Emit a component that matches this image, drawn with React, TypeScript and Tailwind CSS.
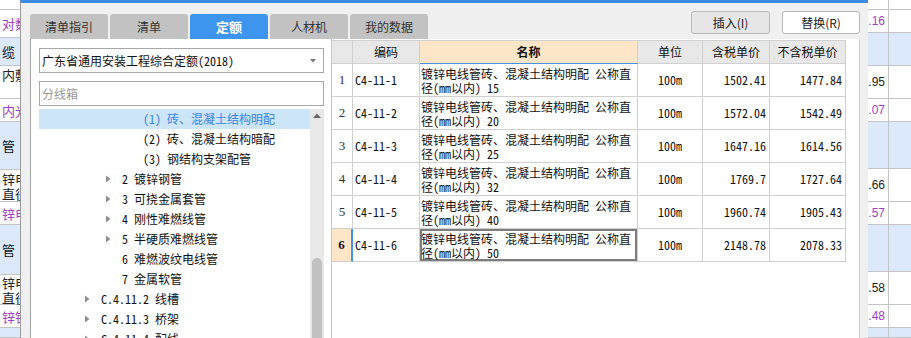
const base = "font-['Noto_Sans_Mono_CJK_SC','Noto_Sans_CJK_SC',sans-serif]";

const leftRows = [
  { h: 'h-[10px]', text: '', tone: 'white' },
  { h: 'h-[28px]', text: '对数', tone: 'purple' },
  { h: 'h-[28px]', text: '缆', tone: 'blue' },
  { h: 'h-[33px]', text: '内敷', tone: 'top' },
  { h: 'h-[23px]', text: '内光', tone: 'purple' },
  { h: 'h-[48px]', text: '管', tone: 'blue' },
  { h: 'h-[32px]', text: '锌电\n直径', tone: 'white' },
  { h: 'h-[23px]', text: '锌电', tone: 'purple' },
  { h: 'h-[50px]', text: '管', tone: 'blue' },
  { h: 'h-[30px]', text: '锌电\n直径', tone: 'white' },
  { h: 'h-[23px]', text: '锌钢', tone: 'purple' },
  { h: 'h-[10px]', text: '', tone: 'blue' },
];

const rightRows = [
  { h: 'h-[10px]', text: '', tone: 'white' },
  { h: 'h-[23px]', text: '1.16', tone: 'purple' },
  { h: 'h-[33px]', text: '', tone: 'blue' },
  { h: 'h-[33px]', text: '2.95', tone: 'white' },
  { h: 'h-[23px]', text: '1.07', tone: 'purple' },
  { h: 'h-[47px]', text: '', tone: 'blue' },
  { h: 'h-[33px]', text: '2.66', tone: 'white' },
  { h: 'h-[23px]', text: '1.57', tone: 'purple' },
  { h: 'h-[47px]', text: '', tone: 'blue' },
  { h: 'h-[33px]', text: '3.58', tone: 'white' },
  { h: 'h-[23px]', text: '1.48', tone: 'purple' },
  { h: 'h-[10px]', text: '', tone: 'blue' },
];

const tabs = ['清单指引', '清单', '定额', '人材机', '我的数据'];

const tree = [
  { pl: 'pl-[88px]', arrow: false, text: '(1) 砖、混凝土结构明配', selected: true },
  { pl: 'pl-[88px]', arrow: false, text: '(2) 砖、混凝土结构暗配' },
  { pl: 'pl-[88px]', arrow: false, text: '(3) 钢结构支架配管' },
  { pl: 'pl-[67px]', arrow: true, text: '2 镀锌钢管' },
  { pl: 'pl-[67px]', arrow: true, text: '3 可挠金属套管' },
  { pl: 'pl-[67px]', arrow: true, text: '4 刚性难燃线管' },
  { pl: 'pl-[67px]', arrow: true, text: '5 半硬质难燃线管' },
  { pl: 'pl-[67px]', arrow: false, text: '6 难燃波纹电线管' },
  { pl: 'pl-[67px]', arrow: false, text: '7 金属软管' },
  { pl: 'pl-[46px]', arrow: true, text: 'C.4.11.2 线槽' },
  { pl: 'pl-[46px]', arrow: true, text: 'C.4.11.3 桥架' },
  { pl: 'pl-[46px]', arrow: true, text: 'C.4.11.4 配线' },
];

const items = [
  { code: 'C4-11-1', size: '15', unit: '100m', tax: '1502.41', net: '1477.84' },
  { code: 'C4-11-2', size: '20', unit: '100m', tax: '1572.04', net: '1542.49' },
  { code: 'C4-11-3', size: '25', unit: '100m', tax: '1647.16', net: '1614.56' },
  { code: 'C4-11-4', size: '32', unit: '100m', tax: '1769.7', net: '1727.64' },
  { code: 'C4-11-5', size: '40', unit: '100m', tax: '1960.74', net: '1905.43' },
  { code: 'C4-11-6', size: '50', unit: '100m', tax: '2148.78', net: '2078.33' },
];

function toneClass(tone: string) {
  if (tone === 'blue') return 'bg-[#dce8fb]';
  if (tone === 'purple') return 'bg-white text-[#a23ec6]';
  return 'bg-white text-[#222]';
}

function Arrow() {
  return (
    <svg width="5" height="8" viewBox="0 0 5 8" className="shrink-0">
      <path d="M0 0.5 L4.5 4 L0 7.5 Z" fill="#8f8f8f" />
    </svg>
  );
}

export default function App() {
  return (
    <div className={`relative h-[338px] w-[911px] overflow-hidden bg-white text-[12px] text-[#111] ${base}`}>
      {/* sheet behind the dialog */}
      <div className="flex h-full">
        <div className="flex w-[48px] flex-col border-r border-[#c4c4c4]">
          {leftRows.map((row, i) => (
            <div
              key={i}
              className={`${row.h} ${toneClass(row.tone)} flex shrink-0 ${row.tone === 'top' ? 'items-start pt-[1px]' : 'items-center'} whitespace-pre border-b border-[#c4c4c4] pl-[2px] text-[13px] leading-[15px]`}
            >
              {row.text}
            </div>
          ))}
        </div>
        <div className="flex-1" />
        <div className="flex w-[52px] flex-col border-r border-[#c4c4c4]">
          {rightRows.map((row, i) => (
            <div
              key={i}
              className={`${row.h} ${toneClass(row.tone)} flex shrink-0 items-center justify-end border-b border-[#c4c4c4] pr-[3px] font-['Liberation_Sans',sans-serif] text-[12px]`}
            >
              {row.text}
            </div>
          ))}
        </div>
        <div className="flex w-[22px] flex-col">
          {rightRows.map((row, i) => (
            <div key={i} className={`${row.h} ${toneClass(row.tone)} shrink-0 border-b border-[#c4c4c4]`} />
          ))}
        </div>
      </div>

      {/* dialog */}
      <div className="absolute left-[20px] top-0 flex h-[338px] w-[848px] flex-col border-l border-t-[3px] border-l-[#9c9c9c] border-t-[#3c8ce6] bg-[#f0f0f0]">
        <div className="flex h-[36px] shrink-0 items-start justify-between pl-[9px] pr-[8px]">
          <div className="flex gap-[2px] self-end">
            {tabs.map((t) => (
              <div
                key={t}
                className={`flex h-[25px] w-[78px] items-center justify-center rounded-t-[3px] ${
                  t === '定额' ? 'bg-[#3d95ee] text-[13px] font-bold text-white' : 'bg-[#c2c2c2] text-[#333]'
                } font-['Noto_Sans_CJK_SC',sans-serif]`}
              >
                {t}
              </div>
            ))}
          </div>
          <div className="mt-[8px] flex gap-[12px] font-['Noto_Sans_CJK_SC',sans-serif]">
            <button className="flex h-[23px] w-[79px] items-center justify-center rounded-[3px] border border-[#b8b8b8] bg-[#e6e6e6] text-[12px] text-[#222]">
              插入(I)
            </button>
            <button className="flex h-[23px] w-[78px] items-center justify-center rounded-[3px] border border-[#b8b8b8] bg-white text-[12px] text-[#222]">
              替换(R)
            </button>
          </div>
        </div>

        <div className="ml-[9px] mr-[8px] flex min-h-0 flex-1 border-l border-r border-l-[#a4a4a4] border-r-[#d0d0d0] bg-white">
          {/* left: quota library tree */}
          <div className="flex w-[293px] shrink-0 flex-col pl-[8px] pt-[9px]">
            <div className="flex h-[25px] items-center justify-between border border-[#a8a8a8] pl-[2px] pr-[7px]">
              <span>广东省通用安装工程综合定额(2018)</span>
              <svg width="6" height="4" viewBox="0 0 6 4">
                <path d="M0 0 L6 0 L3 3.5 Z" fill="#7a7a7a" />
              </svg>
            </div>
            <div className="mt-[8px] flex h-[25px] items-center border border-[#a8a8a8] pl-[2px] text-[#9a9a9a]">
              分线箱
            </div>
            <div className="mt-[3px] flex min-h-0 flex-1">
              <div className="min-w-0 flex-1">
                {tree.map((n) => (
                  <div
                    key={n.text}
                    className={`flex h-[20px] items-center ${n.pl} whitespace-nowrap ${
                      n.selected ? 'bg-[#cce5f8] text-[#3a84e4]' : ''
                    }`}
                  >
                    <span className="flex w-[16px] shrink-0 items-center">{n.arrow && <Arrow />}</span>
                    {n.text}
                  </div>
                ))}
              </div>
              <div className="flex w-[14px] shrink-0 flex-col items-center bg-[#e8e8e8]">
                <svg width="8" height="5" viewBox="0 0 8 5" className="mt-[4px]">
                  <path d="M0 5 L4 0.5 L8 5 Z" fill="#6a6a6a" />
                </svg>
                <div className="mt-[140px] w-[10px] flex-1 rounded-t-[5px] bg-[#c1c1c1]" />
              </div>
            </div>
          </div>

          {/* right: quota grid */}
          <div className="ml-[7px] min-w-0 flex-1 border-l border-[#c8c8c8] pt-[1px]">
            <div className="grid w-[514px] grid-cols-[21px_67px_218px_65px_67px_76px] border-t border-[#d0d0d0]">
              <div className="h-[23px] border-b border-r border-[#d0d0d0] bg-[#e8e8e8]" />
              <div className="flex h-[23px] items-center justify-center border-b border-r border-[#d0d0d0] bg-[#e8e8e8]">编码</div>
              <div className="flex h-[23px] items-center justify-center border-b border-r border-b-[#4a90e2] border-r-[#d0d0d0] bg-[#fde5c8] font-bold">名称</div>
              <div className="flex h-[23px] items-center justify-center border-b border-r border-[#d0d0d0] bg-[#e8e8e8]">单位</div>
              <div className="flex h-[23px] items-center justify-center border-b border-r border-[#d0d0d0] bg-[#e8e8e8]">含税单价</div>
              <div className="flex h-[23px] items-center justify-center border-b border-r border-[#d0d0d0] bg-[#e8e8e8]">不含税单价</div>

              {items.map((it, i) => {
                const current = i === items.length - 1;
                return [
                  <div
                    key={it.code + 'n'}
                    className={`flex h-[33px] items-center justify-center border-b border-[#d0d0d0] font-['Liberation_Serif',serif] text-[13px] ${
                      current ? 'border-r-2 border-r-[#3c96f0] bg-[#fde5c8] font-bold' : 'border-r text-[#333]'
                    }`}
                  >
                    {i + 1}
                  </div>,
                  <div key={it.code + 'c'} className="flex h-[33px] items-center border-b border-r border-[#d0d0d0] pl-[2px]">
                    {it.code}
                  </div>,
                  <div
                    key={it.code + 'm'}
                    className={`h-[33px] overflow-hidden whitespace-nowrap border-b border-r border-[#d0d0d0] pl-[1px] pt-[3px] leading-[14px] ${
                      current ? 'shadow-[inset_0_0_0_2px_#7d7d7d]' : ''
                    }`}
                  >
                    <div>镀锌电线管砖、混凝土结构明配 公称直</div>
                    <div>径(mm以内) {it.size}</div>
                  </div>,
                  <div key={it.code + 'u'} className="flex h-[33px] items-center justify-center border-b border-r border-[#d0d0d0]">
                    {it.unit}
                  </div>,
                  <div key={it.code + 't'} className="flex h-[33px] items-center justify-end border-b border-r border-[#d0d0d0] pr-[3px]">
                    {it.tax}
                  </div>,
                  <div key={it.code + 'x'} className="flex h-[33px] items-center justify-end border-b border-r border-[#d0d0d0] pr-[3px]">
                    {it.net}
                  </div>,
                ];
              })}
            </div>
          </div>
        </div>
      </div>
    </div>
  );
}
